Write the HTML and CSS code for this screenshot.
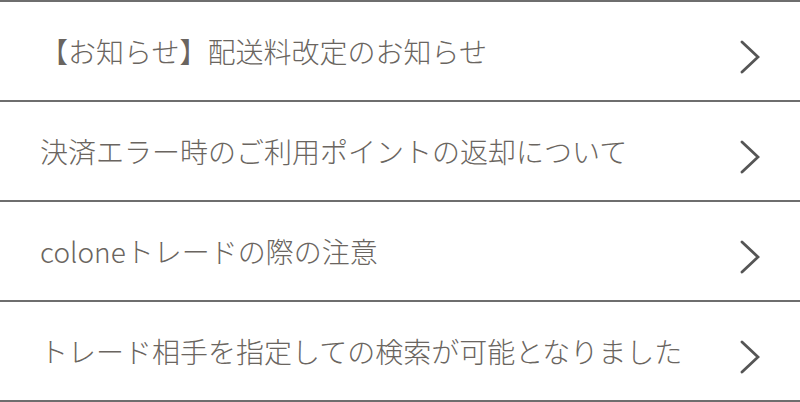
FILE: index.html
```html
<!DOCTYPE html>
<html lang="ja">
<head>
<meta charset="utf-8">
<link rel="stylesheet" href="styles.css">
</head>
<body>
<ul class="news">
  <li class="item"><span class="title">【お知らせ】配送料改定のお知らせ</span><svg class="chev" viewBox="0 0 20 34" width="20" height="34"><polyline points="2,2 18,17 2,32" fill="none" stroke="#555555" stroke-width="2.8" stroke-linecap="round" stroke-linejoin="miter"/></svg></li>
  <li class="item"><span class="title">決済エラー時のご利用ポイントの返却について</span><svg class="chev" viewBox="0 0 20 34" width="20" height="34"><polyline points="2,2 18,17 2,32" fill="none" stroke="#555555" stroke-width="2.8" stroke-linecap="round" stroke-linejoin="miter"/></svg></li>
  <li class="item"><span class="title">coloneトレードの際の注意</span><svg class="chev" viewBox="0 0 20 34" width="20" height="34"><polyline points="2,2 18,17 2,32" fill="none" stroke="#555555" stroke-width="2.8" stroke-linecap="round" stroke-linejoin="miter"/></svg></li>
  <li class="item"><span class="title">トレード相手を指定しての検索が可能となりました</span><svg class="chev" viewBox="0 0 20 34" width="20" height="34"><polyline points="2,2 18,17 2,32" fill="none" stroke="#555555" stroke-width="2.8" stroke-linecap="round" stroke-linejoin="miter"/></svg></li>
</ul>
</body>
</html>
```

FILE: styles.css
```css
html, body {
  margin: 0;
  padding: 0;
  background: #ffffff;
}
.news {
  list-style: none;
  margin: 0;
  padding: 0;
  font-family: "Noto Sans CJK JP", "Noto Sans", sans-serif;
}
.item {
  display: flex;
  align-items: center;
  justify-content: space-between;
  height: 98px;
  border-top: 2px solid #6e6e6e;
  padding: 0 40px;
}
.item:last-child {
  border-bottom: 2px solid #6e6e6e;
}
.title {
  font-size: 28px;
  font-weight: 300;
  line-height: 1;
  color: #6a6560;
  letter-spacing: 0;
}
.chev {
  display: block;
  margin-top: 12px;
  flex: none;
}
```
